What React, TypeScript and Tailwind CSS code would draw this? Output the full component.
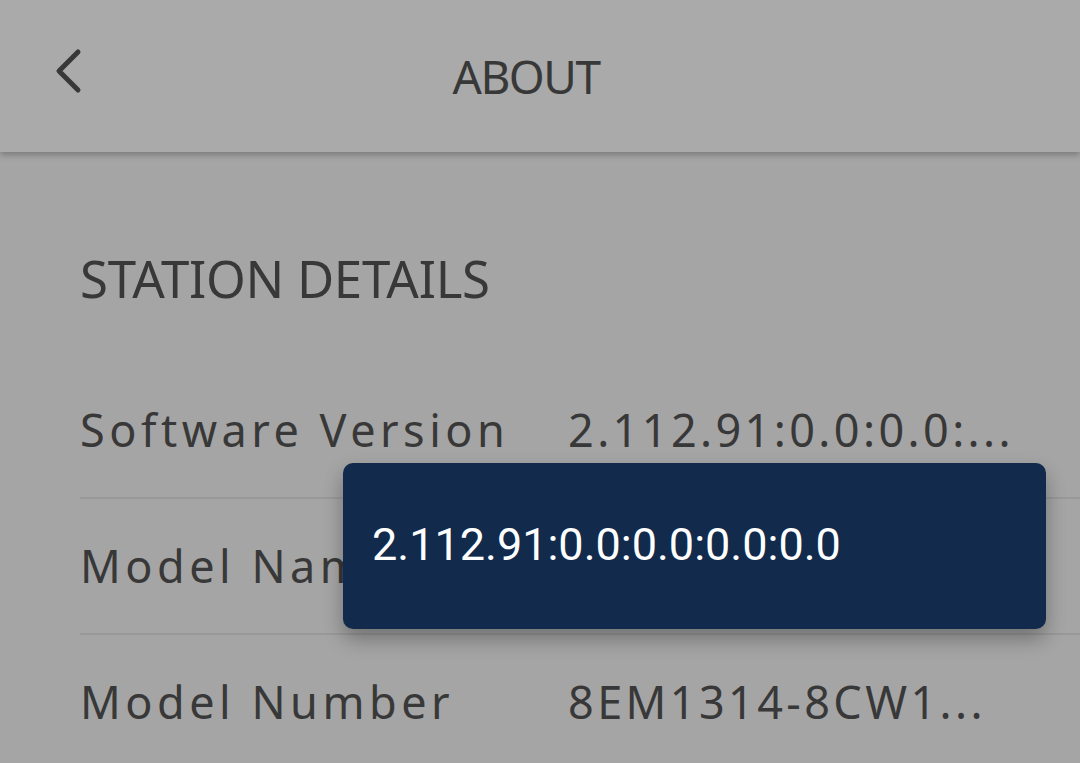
import { ChevronLeft } from "lucide-react";

const ROWS = [
  { label: "Software Version", value: "2.112.91:0.0:0.0:..." },
  { label: "Model Name", value: "" },
  { label: "Model Number", value: "8EM1314-8CW1..." },
];

const ford = { fontFamily: '"Noto Sans", "Open Sans", sans-serif' };

export default function App() {
  return (
    <div className="relative w-[1080px] h-[763px] overflow-hidden bg-[#a5a5a5] text-[#383838]" style={ford}>
      {/* Header */}
      <div className="relative z-10 h-[152px] bg-[#aaaaaa] grid grid-cols-[1fr_auto_1fr] items-center px-[52px] shadow-[0_3px_6px_rgba(0,0,0,0.25)]">
        <svg width="40" height="52" viewBox="0 0 40 52" className="justify-self-start -mt-[4px]">
          <path d="M26 4 L7 23 L26 42" fill="none" stroke="#383838" strokeWidth="5" strokeLinecap="round" strokeLinejoin="round" />
        </svg>
        <h1 className="text-[46px] leading-none tracking-[-1.5px] font-normal pr-[28px]">ABOUT</h1>
        <div />
      </div>

      {/* Content */}
      <div className="pl-[80px]">
        <h2 className="pt-[94px] pb-[53px] text-[51px] leading-[64px] tracking-[-0.3px]">STATION DETAILS</h2>
        <div>
          {ROWS.map((r, i) => (
            <div key={r.label} className={i > 0 ? "border-t-2 border-[#999999]" : ""}>
              <div className="h-[134px] flex items-center text-[45px]">
                <span className="w-[488px] shrink-0 whitespace-nowrap tracking-[4.5px]">{r.label}</span>
                <span className="whitespace-nowrap tracking-[3.4px]">{r.value}</span>
              </div>
            </div>
          ))}
        </div>
      </div>

      {/* Tooltip */}
      <div className="absolute left-[343px] top-[463px] w-[703px] h-[166px] rounded-[10px] bg-[#122a4c] shadow-[0_10px_20px_rgba(0,0,0,0.3)] flex items-center pl-[29px]">
        <span className="text-white text-[45px] leading-none -mt-[3px]" style={{ fontFamily: "Roboto, sans-serif" }}>
          2.112.91:0.0:0.0:0.0:0.0
        </span>
      </div>
    </div>
  );
}
